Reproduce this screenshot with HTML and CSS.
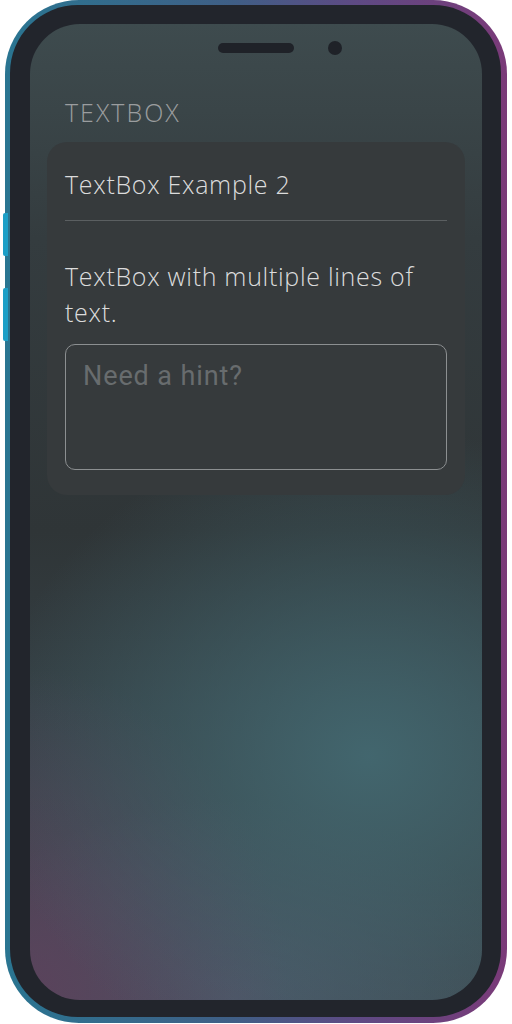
FILE: index.html
```html
<!DOCTYPE html>
<html>
<head>
<meta charset="utf-8">
<link rel="stylesheet" href="styles.css">
</head>
<body>
<div class="device">
  <div class="side-btn btn-a"></div>
  <div class="side-btn btn-b"></div>
  <div class="ring">
    <div class="frame">
      <div class="screen">
        <div class="notch">
          <span class="spacer"></span>
          <span class="speaker"></span>
          <span class="camera"></span>
        </div>
        <div class="section-label">TEXTBOX</div>
        <div class="card">
          <div class="card-title">TextBox Example 2</div>
          <div class="divider"></div>
          <div class="card-body">TextBox with multiple lines of text.</div>
          <div class="input">Need a hint?</div>
        </div>
      </div>
    </div>
  </div>
</div>
</body>
</html>
```

FILE: styles.css
```css
* { box-sizing: border-box; }
html, body { margin: 0; padding: 0; background: #ffffff; }
body { width: 512px; height: 1024px; overflow: hidden; font-family: "Open Sans", "Noto Sans", sans-serif; }

.device {
  position: relative;
  width: 502px;
  height: 1023px;
  margin-left: 5px;
}
.side-btn {
  position: absolute;
  left: -2px;
  width: 5px;
  background: #1c9fc7;
  border-radius: 2px 0 0 2px;
}
.btn-a { top: 213px; height: 43px; }
.btn-b { top: 288px; height: 53px; }

.ring {
  width: 100%;
  height: 100%;
  border-radius: 74px;
  padding: 5px 6px 6px 5px;
  background: linear-gradient(90deg, #2a7591 0%, #3f5f86 45%, #5e4a84 70%, #7a3a78 100%);
}
.frame {
  width: 100%;
  height: 100%;
  border-radius: 68px;
  background: #22252c;
  padding: 19px 19px 17px 20px;
}
.screen {
  width: 100%;
  height: 100%;
  border-radius: 50px;
  overflow: hidden;
  padding: 19px 17px 0 17px;
  background:
    radial-gradient(ellipse 380px 330px at 75% 75%, rgba(67,104,112,0.95), rgba(67,104,112,0) 100%),
    radial-gradient(ellipse 260px 330px at 0% 100%, rgba(92,66,92,0.95), rgba(92,66,92,0) 100%),
    radial-gradient(ellipse 300px 200px at 45% 100%, rgba(78,88,106,0.9), rgba(78,88,106,0) 100%),
    linear-gradient(180deg, #3e4b4e 0%, #343c3f 22%, #2f3537 52%, #354045 70%, #3d4a50 100%);
}
.notch {
  display: flex;
  justify-content: center;
  align-items: center;
  gap: 34px;
  height: 10px;
}
.spacer { width: 14px; }
.speaker {
  width: 76px;
  height: 10px;
  border-radius: 5px;
  background: #1f2228;
}
.camera {
  width: 14px;
  height: 14px;
  border-radius: 50%;
  background: #1f2228;
}
.section-label {
  margin: 44px 0 0 18px;
  font-size: 25px;
  font-weight: 300;
  color: #9a9d9f;
  line-height: 30px;
  letter-spacing: 2px;
}
.card {
  margin-top: 15px;
  background: #363a3c;
  border-radius: 20px;
  padding: 26px 18px 25px 18px;
}
.card-title {
  font-size: 25px;
  font-weight: 300;
  color: #dcdcdc;
  line-height: 32px;
  letter-spacing: 0.7px;
}
.divider {
  height: 1px;
  background: #5b5f61;
  margin-top: 20px;
}
.card-body {
  margin-top: 37px;
  font-size: 25px;
  font-weight: 300;
  color: #dcdcdc;
  line-height: 36px;
  letter-spacing: 0.7px;
}
.input {
  margin-top: 14px;
  height: 126px;
  border: 1px solid #8c8f91;
  border-radius: 10px;
  padding: 15px 17px;
  font-family: "Roboto", sans-serif;
  font-size: 27px;
  letter-spacing: 0.9px;
  color: #686c6e;
  line-height: 32px;
}
```
